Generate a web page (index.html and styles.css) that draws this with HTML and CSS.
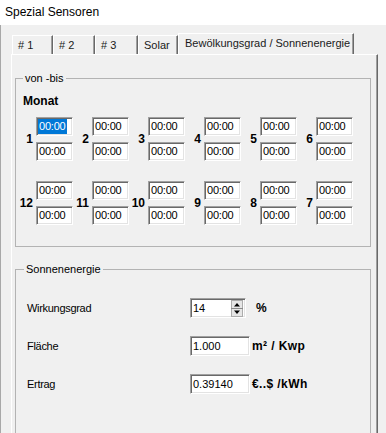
FILE: index.html
```html
<!DOCTYPE html>
<html lang="de">
<head>
    <meta charset="UTF-8">
    <meta name="viewport" content="width=device-width, initial-scale=1.0">
    <title>Spezial Sensoren</title>
    <link rel="stylesheet" href="styles.css">
</head>
<body>
    <div class="titlebar">Spezial Sensoren</div>

    <div class="window">
        <div class="tabs">
            <div class="tab tab-1"># 1</div>
            <div class="tab tab-2"># 2</div>
            <div class="tab tab-3"># 3</div>
            <div class="tab tab-solar">Solar</div>
            <div class="tab active">Bewölkungsgrad / Sonnenenergie</div>
        </div>

        <div class="panel">
            <fieldset class="group group-times">
                <legend>von -bis</legend>
                <div class="month-title">Monat</div>

                <div class="month-grid">
                    <div class="month">
                        <span class="month-num">1</span>
                        <div class="month-times">
                            <div class="field time"><span class="sel">00:00</span></div>
                            <div class="field time">00:00</div>
                        </div>
                    </div>
                    <div class="month">
                        <span class="month-num">2</span>
                        <div class="month-times">
                            <div class="field time">00:00</div>
                            <div class="field time">00:00</div>
                        </div>
                    </div>
                    <div class="month">
                        <span class="month-num">3</span>
                        <div class="month-times">
                            <div class="field time">00:00</div>
                            <div class="field time">00:00</div>
                        </div>
                    </div>
                    <div class="month">
                        <span class="month-num">4</span>
                        <div class="month-times">
                            <div class="field time">00:00</div>
                            <div class="field time">00:00</div>
                        </div>
                    </div>
                    <div class="month">
                        <span class="month-num">5</span>
                        <div class="month-times">
                            <div class="field time">00:00</div>
                            <div class="field time">00:00</div>
                        </div>
                    </div>
                    <div class="month">
                        <span class="month-num">6</span>
                        <div class="month-times">
                            <div class="field time">00:00</div>
                            <div class="field time">00:00</div>
                        </div>
                    </div>

                    <div class="month">
                        <span class="month-num">12</span>
                        <div class="month-times">
                            <div class="field time">00:00</div>
                            <div class="field time">00:00</div>
                        </div>
                    </div>
                    <div class="month">
                        <span class="month-num">11</span>
                        <div class="month-times">
                            <div class="field time">00:00</div>
                            <div class="field time">00:00</div>
                        </div>
                    </div>
                    <div class="month">
                        <span class="month-num">10</span>
                        <div class="month-times">
                            <div class="field time">00:00</div>
                            <div class="field time">00:00</div>
                        </div>
                    </div>
                    <div class="month">
                        <span class="month-num">9</span>
                        <div class="month-times">
                            <div class="field time">00:00</div>
                            <div class="field time">00:00</div>
                        </div>
                    </div>
                    <div class="month">
                        <span class="month-num">8</span>
                        <div class="month-times">
                            <div class="field time">00:00</div>
                            <div class="field time">00:00</div>
                        </div>
                    </div>
                    <div class="month">
                        <span class="month-num">7</span>
                        <div class="month-times">
                            <div class="field time">00:00</div>
                            <div class="field time">00:00</div>
                        </div>
                    </div>
                </div>
            </fieldset>

            <fieldset class="group group-solar">
                <legend>Sonnenenergie</legend>

                <div class="solar-rows">
                    <div class="solar-row">
                        <span class="solar-label">Wirkungsgrad</span>
                        <div class="field num spin">
                            <span>14</span>
                            <!-- up/down spin buttons -->
                            <svg class="spin-btn" width="12" height="17" viewBox="0 0 12 17">
                                <rect x="0.5" y="0.5" width="11" height="16" fill="#e6e6e6" stroke="#acacac"/>
                                <line x1="0" y1="8.5" x2="12" y2="8.5" stroke="#8a8a8a"/>
                                <path d="M6 3 L9 6.5 L3 6.5 Z" fill="#000"/>
                                <path d="M3 10.5 L9 10.5 L6 14 Z" fill="#000"/>
                            </svg>
                        </div>
                        <span class="unit unit-pct">%</span>
                    </div>
                    <div class="solar-row">
                        <span class="solar-label">Fläche</span>
                        <div class="field num">1.000</div>
                        <span class="unit">m² / Kwp</span>
                    </div>
                    <div class="solar-row">
                        <span class="solar-label">Ertrag</span>
                        <div class="field num">0.39140</div>
                        <span class="unit">€..$ /kWh</span>
                    </div>
                </div>
            </fieldset>
        </div>
    </div>
</body>
</html>
```

FILE: styles.css
```css
body {
    margin: 0;
    width: 386px;
    height: 433px;
    overflow: hidden;
    background-color: #f0f0f0;
    font-family: 'Liberation Sans', Arial, sans-serif;
    font-size: 11px;
    color: #000;
}
.titlebar {
    height: 25px;
    line-height: 24px;
    padding-left: 5px;
    background: #fff;
    font-size: 12px;
}
.window {
    padding: 8px 0 0 10px;
    border-left: 1px solid #a8a8a8;
}

/* tabs */
.tabs {
    display: flex;
    align-items: flex-end;
    height: 21px;
    margin-left: 1px;
}
.tab {
    box-sizing: border-box;
    height: 19px;
    line-height: 18px;
    padding-left: 5px;
    border-top: 1px solid #fff;
    border-left: 1px solid #fff;
    border-right: 1px solid #696969;
    box-shadow: inset -1px 0 #a0a0a0;
    white-space: nowrap;
    color: #1a1a1a;
}
.tab-1 { width: 41px; }
.tab-2 { width: 42px; }
.tab-3 { width: 43px; }
.tab-solar { width: 40px; }
.tab.active {
    width: 176px;
    height: 21px;
    padding-left: 6px;
    padding-bottom: 2px;
}

.panel {
    box-sizing: border-box;
    width: 367px;
    height: 379px;
    overflow: hidden;
    padding: 17px 0 0 3px;
    border-top: 1px solid #fff;
    border-left: 1px solid #fff;
    border-right: 1px solid #696969;
    box-shadow: inset -1px 0 #a0a0a0;
}

/* group boxes */
.group {
    box-sizing: border-box;
    width: 356px;
    margin: 0;
    padding: 0;
    min-inline-size: 0;
    border: 1px solid #b3b3b3;
}
.group legend {
    padding: 0 2px;
    margin-left: 7px;
    line-height: 13px;
}
.group-solar {
    margin-top: 16px;
    height: 180px;
}
.group-solar legend {
    margin-left: 8px;
}

.month-title {
    margin: 9px 0 0 7px;
    font-size: 12px;
    line-height: 14px;
    font-weight: bold;
}
.month-grid {
    display: grid;
    grid-template-columns: repeat(6, 56px);
    row-gap: 20px;
    margin: 9px 0 0 1px;
    padding-bottom: 21px;
}
.month {
    display: flex;
    align-items: center;
}
.month-num {
    width: 16px;
    margin-right: 3px;
    text-align: right;
    font-size: 12px;
    font-weight: bold;
}
.month-times {
    display: flex;
    flex-direction: column;
    gap: 6px;
}

/* sunken edit boxes */
.field {
    box-sizing: border-box;
    background: #fff;
    border: 1px solid;
    border-color: #a0a0a0 #fff #fff #a0a0a0;
    box-shadow: inset 1px 1px #696969, inset -1px -1px #e3e3e3;
    padding-left: 2px;
    white-space: nowrap;
}
.time {
    width: 37px;
    height: 19px;
    line-height: 17px;
    letter-spacing: -0.2px;
}
.sel {
    display: inline-block;
    vertical-align: top;
    margin: 1px 0 0 -1px;
    padding: 0 1px;
    line-height: 15px;
    background: #0078d7;
    color: #fff;
}

.solar-rows {
    padding: 22px 0 0 11px;
}
.solar-row {
    display: flex;
    align-items: center;
    height: 20px;
    margin-bottom: 18px;
}
.solar-label {
    width: 163px;
    letter-spacing: -0.3px;
}
.num {
    width: 60px;
    height: 20px;
    line-height: 18px;
}
.num.spin {
    width: 56px;
    display: flex;
    align-items: center;
    justify-content: space-between;
    padding-right: 2px;
}
.spin-btn {
    display: block;
}
.unit {
    margin-left: 2px;
    font-size: 12px;
    font-weight: bold;
    letter-spacing: 0.4px;
}
.unit-pct {
    margin-left: 10px;
}
```
